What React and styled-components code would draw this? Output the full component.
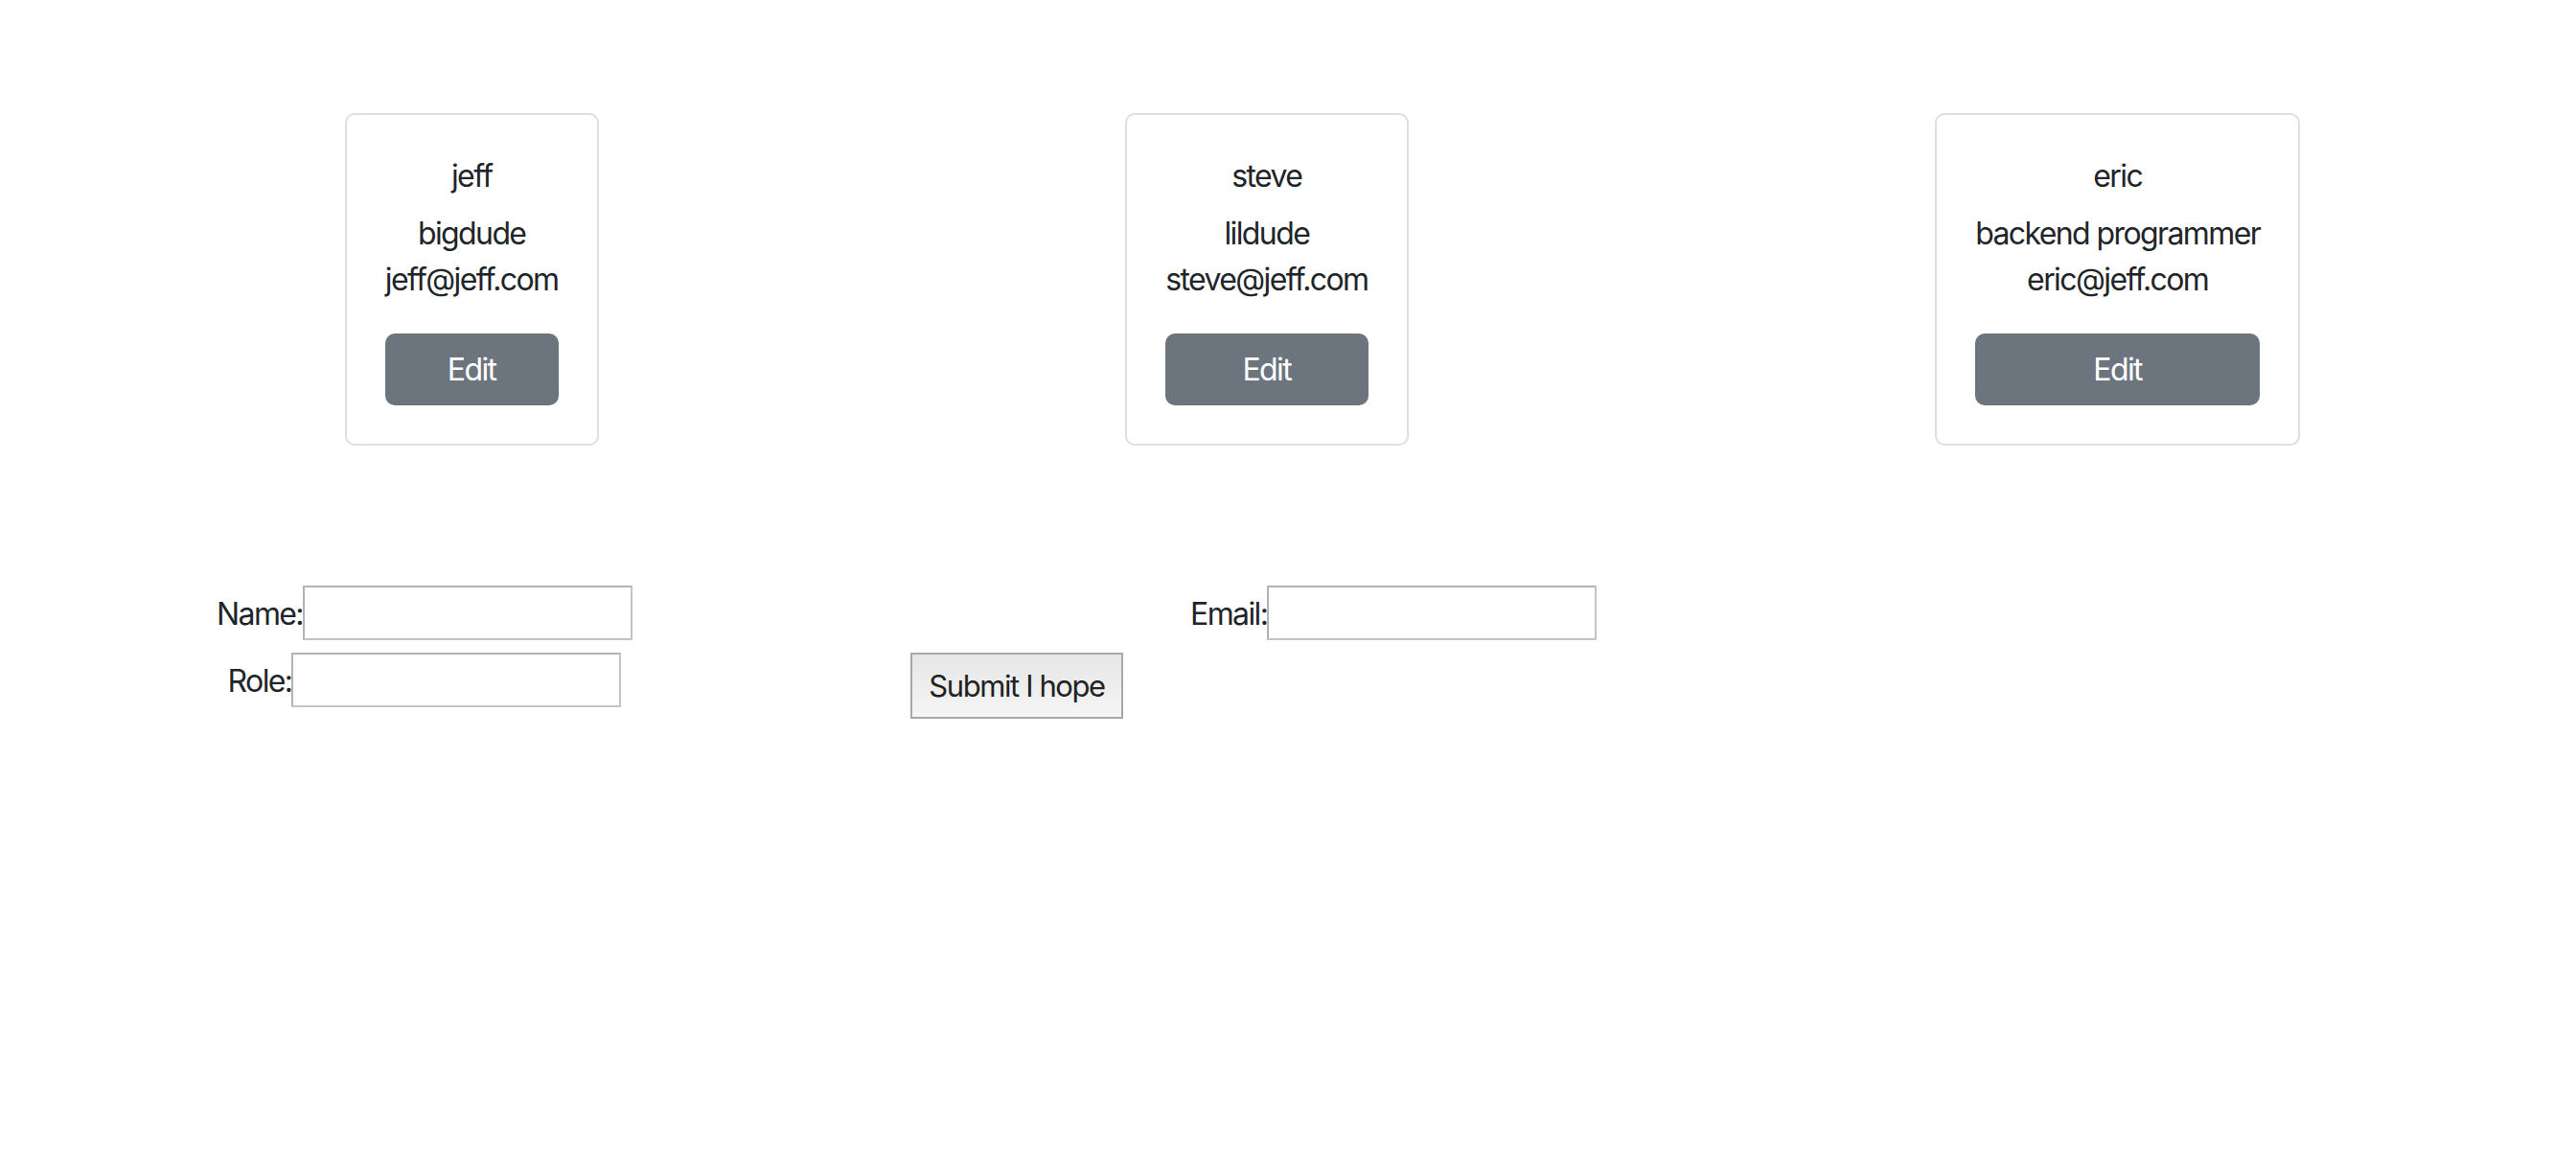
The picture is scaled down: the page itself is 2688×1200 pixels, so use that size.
import React from 'react';
import styled, { createGlobalStyle } from 'styled-components';

const GlobalStyle = createGlobalStyle`
  body {
    margin: 0;
    background: #ffffff;
    color: #212529;
    font-family: Inter, "Noto Sans", "Liberation Sans", sans-serif;
    font-size: 32px;
    line-height: 48px;
    letter-spacing: -1.6px;
  }
`;

const Page = styled.div`
  padding-top: 118px;
`;

const CardRow = styled.div`
  display: flex;
  justify-content: space-around;
  align-items: flex-start;
  padding: 0 13px 0 85px;
`;

const Card = styled.div`
  border: 2px solid #dfdfdf;
  border-radius: 10px;
  padding: 40px;
  text-align: center;
  display: flex;
  flex-direction: column;
`;

const CardName = styled.div`
  margin-bottom: 12px;
`;

const CardLine = styled.div``;

const EditButton = styled.button`
  margin-top: 32px;
  height: 75px;
  width: 100%;
  border: none;
  border-radius: 10px;
  background: #6c757d;
  color: #ffffff;
  font-family: inherit;
  font-size: 32px;
  letter-spacing: inherit;
  cursor: pointer;
`;

const Form = styled.form`
  display: grid;
  grid-template-columns: auto auto auto;
  justify-content: start;
  align-items: start;
  row-gap: 13px;
  margin-top: 146px;
  padding-left: 226px;
`;

const Field = styled.div`
  display: flex;
  align-items: center;
  justify-self: ${(p) => (p.$center ? 'center' : 'start')};
  margin-left: ${(p) => p.$offset || 0}px;
`;

const Label = styled.label`
  padding-top: 3px;
`;

const Input = styled.input`
  box-sizing: border-box;
  width: 344px;
  height: 57px;
  border: 2px solid #c4c4c4;
  border-top-color: #b3b3b3;
  border-left-color: #b3b3b3;
  background: #fff;
  font-family: inherit;
  font-size: 26px;
  padding: 2px 4px;
`;

const SubmitButton = styled.button`
  box-sizing: border-box;
  width: 222px;
  height: 69px;
  padding: 0;
  margin-left: ${(p) => p.$offset}px;
  border: 2px solid #a8a8a8;
  background: linear-gradient(to bottom, #e6e6e6, #f5f5f5);
  color: #222;
  font-family: inherit;
  font-size: 31px;
  line-height: 36px;
  letter-spacing: -1.4px;
`;

const users = [
  { name: 'jeff', role: 'bigdude', email: 'jeff@jeff.com' },
  { name: 'steve', role: 'lildude', email: 'steve@jeff.com' },
  { name: 'eric', role: 'backend programmer', email: 'eric@jeff.com' },
];

export default function App() {
  return (
    <Page>
      <GlobalStyle />
      <CardRow>
        {users.map((u) => (
          <Card key={u.name}>
            <CardName>{u.name}</CardName>
            <CardLine>{u.role}</CardLine>
            <CardLine>{u.email}</CardLine>
            <EditButton type="button">Edit</EditButton>
          </Card>
        ))}
      </CardRow>

      <Form onSubmit={(e) => e.preventDefault()}>
        <Field>
          <Label htmlFor="name">Name:</Label>
          <Input id="name" type="text" />
        </Field>
        <div />
        <Field $offset={70}>
          <Label htmlFor="email">Email:</Label>
          <Input id="email" type="text" />
        </Field>
        <Field $center>
          <Label htmlFor="role">Role:</Label>
          <Input id="role" type="text" />
        </Field>
        <SubmitButton type="submit" $offset={290}>Submit I hope</SubmitButton>
      </Form>
    </Page>
  );
}
